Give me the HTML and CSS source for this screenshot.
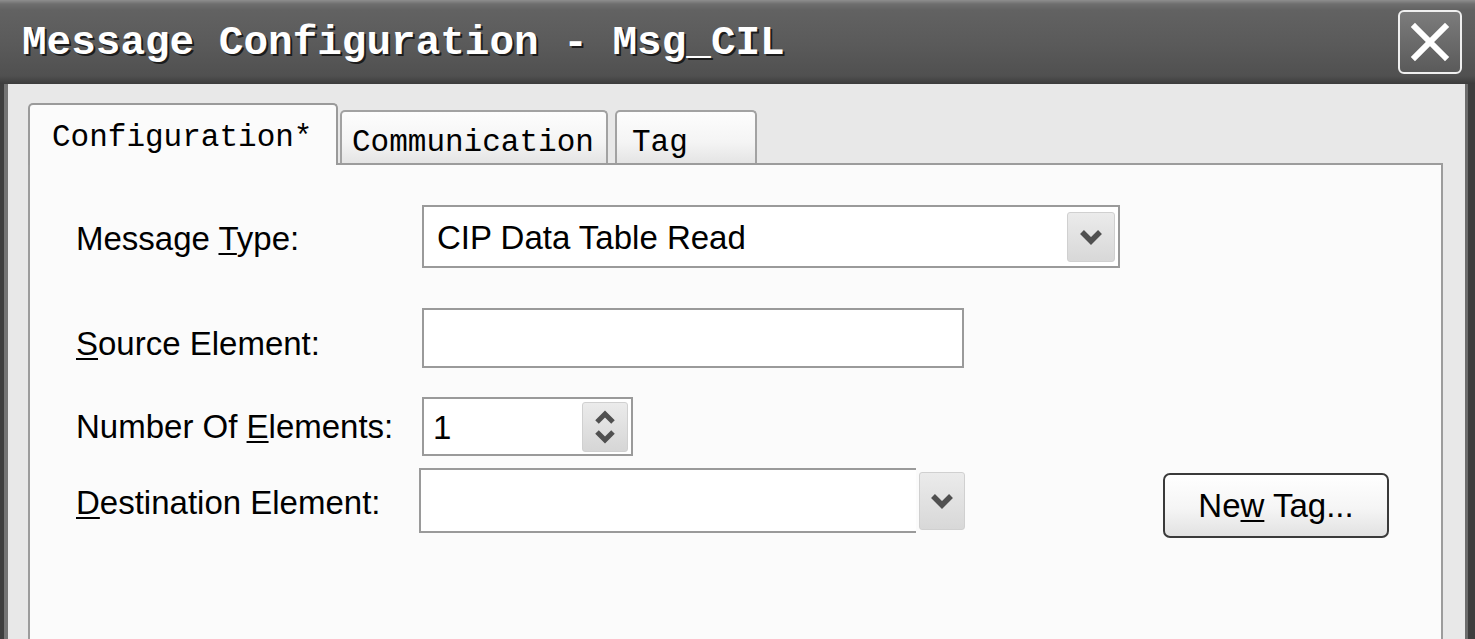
FILE: index.html
```html
<!DOCTYPE html>
<html>
<head>
<meta charset="utf-8">
<title>Message Configuration - Msg_CIL</title>
<link rel="stylesheet" href="styles.css">
</head>
<body>
<div class="window">
  <div class="titlebar">
    <span class="title">Message Configuration - Msg_CIL</span>
    <button class="close" aria-label="Close">
      <svg width="40" height="40" viewBox="0 0 40 40"><path d="M5 5 L35 35 M35 5 L5 35" stroke="#ffffff" stroke-width="6" stroke-linecap="square" fill="none"/></svg>
    </button>
  </div>
  <div class="body">
    <div class="tabs">
      <div class="tab tab-active">Configuration*</div>
      <div class="tab tab-comm">Communication</div>
      <div class="tab tab-tag">Tag</div>
    </div>
    <div class="panel">
      <div class="row row-type">
        <div class="label">Message <u>T</u>ype:</div>
        <div class="combo combo-type">
          <span class="value">CIP Data Table Read</span>
          <span class="drop">
            <svg width="24" height="18" viewBox="0 0 24 18"><path d="M3 4 L12 13 L21 4" stroke="#505050" stroke-width="5.5" fill="none"/></svg>
          </span>
        </div>
      </div>
      <div class="row row-source">
        <div class="label"><u>S</u>ource Element:</div>
        <div class="textbox"></div>
      </div>
      <div class="row row-count">
        <div class="label">Number Of <u>E</u>lements:</div>
        <div class="spin">
          <span class="value">1</span>
          <span class="spin-btn">
            <svg width="24" height="44" viewBox="0 0 24 44"><path d="M4 17 L12 9 L20 17" stroke="#505050" stroke-width="5" fill="none"/><path d="M4 27 L12 35 L20 27" stroke="#505050" stroke-width="5" fill="none"/></svg>
          </span>
        </div>
      </div>
      <div class="row row-dest">
        <div class="label"><u>D</u>estination Element:</div>
        <div class="dest">
          <div class="dest-box"></div>
          <span class="drop drop-dest">
            <svg width="24" height="18" viewBox="0 0 24 18"><path d="M3 4 L12 13 L21 4" stroke="#505050" stroke-width="5.5" fill="none"/></svg>
          </span>
        </div>
        <button class="newtag">Ne<u>w</u> Tag...</button>
      </div>
    </div>
  </div>
</div>
</body>
</html>
```
FILE: styles.css
```css
* { box-sizing: border-box; }
html, body { margin: 0; padding: 0; }
body {
  width: 1475px;
  height: 639px;
  overflow: hidden;
  background: #3e3e3e;
  font-family: "Liberation Sans", Arial, sans-serif;
  color: #000;
}
.window {
  width: 1475px;
  height: 639px;
  display: flex;
  flex-direction: column;
  background: #3e3e3e;
}
.titlebar {
  height: 84px;
  flex: none;
  display: flex;
  align-items: center;
  justify-content: space-between;
  padding: 0 13px 0 22px;
  background: linear-gradient(#8e8e8e 0, #6e6e6e 4px, #626262 10px, #5a5a5a 45px, #505050 76px, #3c3c3c 84px);
}
.title {
  font-family: "Liberation Mono", "DejaVu Sans Mono", monospace;
  font-weight: bold;
  font-size: 41px;
  color: #ffffff;
  text-shadow: 2px 2px 0 #1c1c1c;
  margin-top: 2px;
  white-space: pre;
}
.close {
  width: 64px;
  height: 64px;
  border: 2px solid #efefef;
  border-radius: 6px;
  background: linear-gradient(#7c7c7c, #5a5a5a);
  padding: 0;
  display: flex;
  align-items: center;
  justify-content: center;
}
.body {
  flex: 1;
  margin: 0 7px 0 4px;
  border-left: 4px solid #747474;
  border-right: 3px solid #6c6c6c;
  background: #e8e8e8;
  padding: 19px 22px 0 20px;
  display: flex;
  flex-direction: column;
  min-height: 0;
}
.tabs {
  display: flex;
  align-items: flex-end;
  height: 62px;
  flex: none;
  position: relative;
  z-index: 1;
  margin-bottom: -2px;
}
.tab {
  font-family: "Liberation Mono", "DejaVu Sans Mono", monospace;
  font-size: 31px;
  line-height: 1;
  border: 2px solid #a2a2a2;
  border-bottom: none;
  border-radius: 5px 5px 0 0;
  background: linear-gradient(#fdfdfd, #f4f4f4 60%, #e4e4e4);
  height: 53px;
  margin-bottom: 2px;
  padding-top: 15px;
  white-space: pre;
}
.tab-active {
  width: 310px;
  height: 62px;
  margin-bottom: 0;
  background: #fbfbfb;
  padding-left: 22px;
  padding-top: 17px;
  border-color: #9a9a9a;
}
.tab-comm {
  width: 268px;
  margin-left: 2px;
  padding-left: 10px;
}
.tab-tag {
  width: 142px;
  margin-left: 7px;
  padding-left: 15px;
}
.panel {
  flex: 1;
  border: 2px solid #9c9c9c;
  border-bottom: none;
  background: #fbfbfb;
  padding: 40px 52px 0 46px;
  display: flex;
  flex-direction: column;
}
.row {
  display: flex;
  align-items: center;
}
.label {
  width: 346px;
  flex: none;
  font-size: 33px;
  line-height: 1;
  white-space: pre;
}
.label u { text-underline-offset: 3px; text-decoration-thickness: 2px; }
.row-type { height: 63px; }
.row-type .label { padding-top: 4px; }
.row-source { height: 60px; margin-top: 40px; }
.row-source .label { padding-top: 10px; }
.row-count { height: 59px; margin-top: 29px; }
.row-dest { height: 70px; margin-top: 12px; align-items: flex-start; }
.row-dest .label { padding-top: 18px; }
.combo, .textbox, .spin {
  border: 2px solid #9a9a9a;
  background: #ffffff;
  height: 100%;
  display: flex;
  align-items: center;
}
.combo-type {
  width: 698px;
  padding: 0 3px 0 13px;
}
.value {
  flex: 1;
  font-size: 33px;
  line-height: 1;
  padding-top: 2px;
}
.drop {
  width: 48px;
  height: 50px;
  flex: none;
  display: flex;
  align-items: center;
  justify-content: center;
  background: linear-gradient(#ebebeb, #d8d8d8);
  border: 1px solid #d0d0d0;
  border-radius: 3px;
}
.textbox { width: 542px; }
.spin {
  width: 211px;
  padding: 0 3px 0 9px;
}
.spin-btn {
  width: 46px;
  height: 50px;
  flex: none;
  display: flex;
  align-items: center;
  justify-content: center;
  background: linear-gradient(#ebebeb, #d6d6d6);
  border: 1px solid #d0d0d0;
  border-radius: 3px;
}
.dest {
  display: flex;
  align-items: center;
  gap: 3px;
  margin-left: -3px;
  height: 65px;
}
.dest-box {
  width: 497px;
  height: 65px;
  border: 2px solid #9a9a9a;
  border-right: none;
  background: #ffffff;
}
.drop-dest { width: 46px; height: 58px; }
.newtag {
  margin-left: auto;
  margin-top: 5px;
  width: 226px;
  height: 65px;
  border: 2px solid #3a3a3a;
  border-radius: 7px;
  background: linear-gradient(#ffffff, #f5f5f5 55%, #e2e2e2);
  font-family: "Liberation Sans", Arial, sans-serif;
  font-size: 33px;
  color: #000;
  padding: 0;
}
.newtag u { text-underline-offset: 3px; text-decoration-thickness: 2px; }
```
